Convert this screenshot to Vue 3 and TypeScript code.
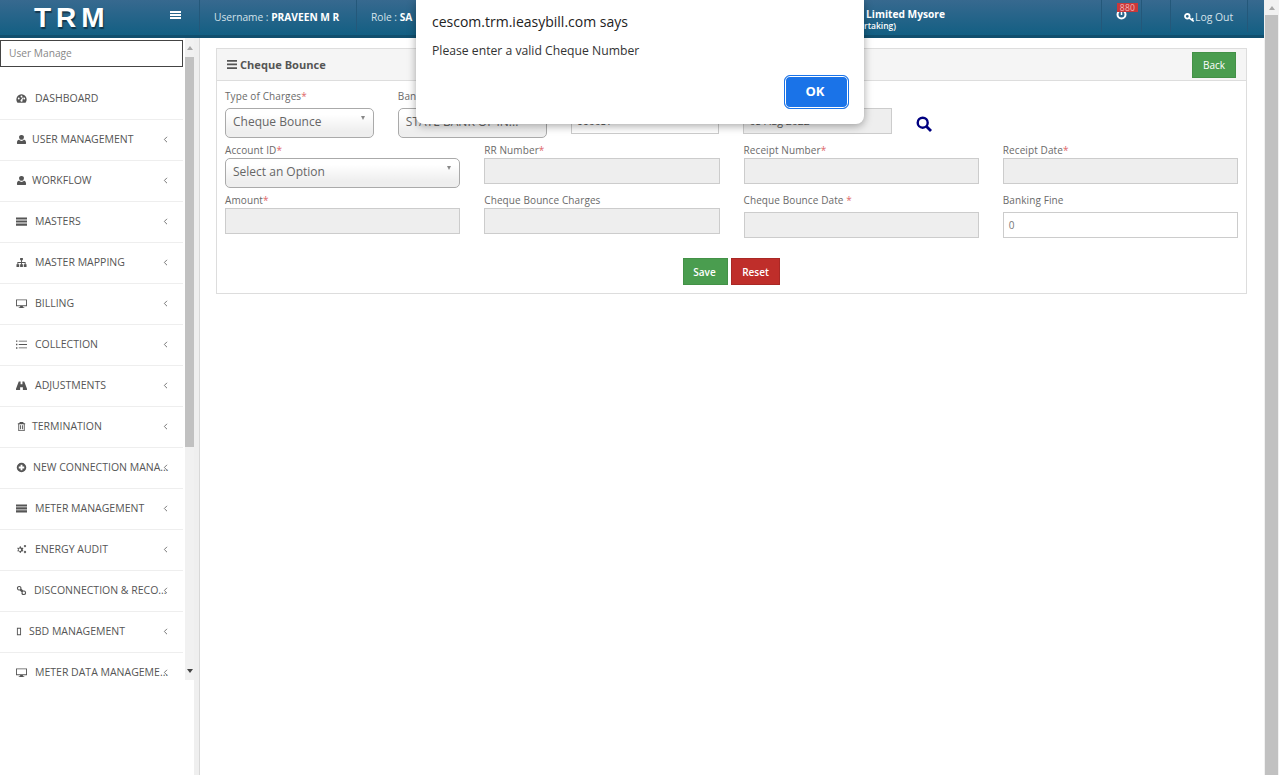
<script setup lang="ts">
interface MenuItem { label: string; icon: string; gap: number }
const items: MenuItem[] = [
  { label: 'DASHBOARD', icon: 'gauge', gap: 8 },
  { label: 'USER MANAGEMENT', icon: 'user', gap: 5 },
  { label: 'WORKFLOW', icon: 'user', gap: 5 },
  { label: 'MASTERS', icon: 'bars', gap: 8 },
  { label: 'MASTER MAPPING', icon: 'sitemap', gap: 8 },
  { label: 'BILLING', icon: 'desktop', gap: 8 },
  { label: 'COLLECTION', icon: 'list', gap: 8 },
  { label: 'ADJUSTMENTS', icon: 'binoculars', gap: 8 },
  { label: 'TERMINATION', icon: 'trash', gap: 5 },
  { label: 'NEW CONNECTION MANA...', icon: 'plus', gap: 6 },
  { label: 'METER MANAGEMENT', icon: 'server', gap: 8 },
  { label: 'ENERGY AUDIT', icon: 'cogs', gap: 8 },
  { label: 'DISCONNECTION & RECO...', icon: 'link', gap: 7 },
  { label: 'SBD MANAGEMENT', icon: 'box', gap: 2 },
  { label: 'METER DATA MANAGEME...', icon: 'desktop', gap: 8 }
]
const row2 = ['RR Number', 'Receipt Number', 'Receipt Date']
</script>

<template>
  <div class="page">
    <div class="column">
      <header class="topbar">
        <div class="brand">TRM</div>
        <div class="burger-cell">
          <svg class="burger" width="11" height="8" viewBox="0 0 11 8"><path d="M0 0h11v2H0zM0 3h11v2H0zM0 6h11v2H0z" fill="#fff" /></svg>
        </div>
        <div class="cell user-cell">Username : <b>PRAVEEN M R</b></div>
        <div class="cell role-cell">Role : <b>SA</b></div>
        <div class="org-cell">
          <div class="org-main">Chamundeshwari Electricity Supply Corporation Limited Mysore</div>
          <div class="org-sub">(A Government of Karnataka Undertaking)</div>
        </div>
        <div class="cell notify-cell">
          <svg class="clock" width="11" height="11" viewBox="0 0 11 11"><circle cx="5.500" cy="5.500" r="4" fill="none" stroke="#fff" stroke-width="2" /><path d="M5.500 3v3" stroke="#fff" stroke-width="1.500" /></svg>
          <span class="badge">880</span>
        </div>
        <div class="cell spacer-cell"></div>
        <div class="cell logout-cell">
          <svg width="11" height="9" viewBox="0 0 11 9"><circle cx="3.300" cy="3.300" r="2.300" fill="none" stroke="#fff" stroke-width="1.800" /><path d="M5 4.800L9.800 8.300M7.600 6.600L9.300 5.300" fill="none" stroke="#fff" stroke-width="1.600" /></svg>
          <span>Log Out</span>
        </div>
        <div class="tail-cell"></div>
      </header>

      <div class="body">
        <aside class="sidebar">
          <div class="side-scroll">
            <div class="side-list">
              <div class="search-box">User Manage</div>
              <nav class="menu">
                <div v-for="(item, i) in items" :key="i" class="menu-item">
                  <span class="menu-icon">
                    <svg width="11" height="11" viewBox="0 0 12 12" fill="#555">
                      <path v-if="item.icon === 'gauge'" fill-rule="evenodd" d="M6 1.500a5.500 5.500 0 0 0-5 8l.6 1h8.800l.6-1a5.500 5.500 0 0 0-5-8zM3 7a1 1 0 1 1 0-2 1 1 0 0 1 0 2zm3-2.200a1 1 0 1 1 0-2 1 1 0 0 1 0 2zm0 4.700a1.200 1.200 0 0 1-.4-2.300L7.500 4.600l.5.2-1 3a1.200 1.200 0 0 1-1 1.700zM9 7a1 1 0 1 1 0-2 1 1 0 0 1 0 2z" />
                      <path v-else-if="item.icon === 'user'" d="M6 1a2.600 2.600 0 0 1 2.600 3A2.600 2.600 0 0 1 6 6.400 2.600 2.600 0 0 1 3.400 4 2.600 2.600 0 0 1 6 1zM3.200 6.400C4 7.200 4.900 7.500 6 7.500s2-.3 2.800-1.100c1.400.3 2.200 1.600 2.200 3.300 0 .9-.6 1.300-1.300 1.300H2.300C1.600 11 1 10.600 1 9.700c0-1.700.8-3 2.200-3.300z" />
                      <path v-else-if="item.icon === 'bars'" d="M0 1.500h12v2.300H0zM0 4.900h12v2.300H0zM0 8.300h12v2.300H0z" />
                      <path v-else-if="item.icon === 'sitemap'" d="M4.500 1h3v2.500H6.500V5.500H10.500V8H11.500V11H8.500V8H9.500V6.500H6.500V8H7.500V11H4.500V8H5.500V6.500H2.500V8H3.500V11H.5V8H1.500V5.500H5.500V3.500H4.500z" />
                      <path v-else-if="item.icon === 'desktop'" fill-rule="evenodd" d="M0 1.500h12v7.500H7.500v1h1.500v1H3v-1h1.500v-1H0zM1 2.500v5.500h10V2.500z" />
                      <path v-else-if="item.icon === 'list'" d="M0 1.500h1.500V3H0zM0 5.200h1.500v1.500H0zM0 9h1.500v1.500H0zM3 1.800h9v1H3zM3 5.500h9v1H3zM3 9.200h9v1H3z" />
                      <path v-else-if="item.icon === 'binoculars'" d="M3 1.500h2v3h2v-3h2l3 8v1.500H7.500V8h-3v3H0V9.500z" />
                      <path v-else-if="item.icon === 'trash'" fill-rule="evenodd" d="M2 2.500h1.500L4.200 1h3.600l.7 1.500H10v1H9.500V11h-7V3.500H2zM3.500 3.500V10h5V3.500zM4.500 4.500h1v4.500h-1zM6.500 4.500h1v4.500h-1z" />
                      <path v-else-if="item.icon === 'plus'" fill-rule="evenodd" d="M6 .8a5.200 5.200 0 1 1 0 10.400A5.200 5.200 0 0 1 6 .8zM5 3v2H3v2h2v2h2V7h2V5H7V3z" />
                      <path v-else-if="item.icon === 'server'" d="M0 1.500h12v2.400H0zM0 4.700h12v2.400H0zM0 7.900h12v2.400H0z" />
                      <path v-else-if="item.icon === 'cogs'" fill-rule="evenodd" d="M4.500 2.500l.9.200.2 1 1 .6.900-.4.600 1-.7.600v1.200l.7.600-.6 1-.9-.4-1 .6-.2 1h-1.300l-.2-1-1-.6-.9.400-.6-1 .7-.6V5.500l-.7-.6.600-1 .9.400 1-.6.200-1zM4.200 4.800a1.400 1.400 0 1 0 .1 2.800 1.400 1.400 0 0 0-.1-2.800zM9.800 1a1.300 1.300 0 1 1 0 2.600 1.300 1.300 0 0 1 0-2.600zm0 .8a.5.500 0 1 0 0 1 .5.500 0 0 0 0-1zM9.800 7.400a1.300 1.300 0 1 1 0 2.600 1.300 1.300 0 0 1 0-2.600zm0 .8a.5.500 0 1 0 0 1 .5.500 0 0 0 0-1z" />
                      <path v-else-if="item.icon === 'link'" fill-rule="evenodd" d="M3.500 1a2.500 2.500 0 0 1 2.400 3.200l1.900 1.900a2.500 2.500 0 1 1-1.700 1.700L4.200 5.900A2.500 2.500 0 1 1 3.500 1zm0 1.200a1.300 1.300 0 1 0 0 2.600 1.300 1.300 0 0 0 0-2.600zm5 5a1.300 1.300 0 1 0 0 2.600 1.300 1.300 0 0 0 0-2.600z" />
                      <path v-else fill-rule="evenodd" d="M1 2h4.500v8H1zM2 3v6h2.500V3z" />
                    </svg>
                  </span>
                  <span class="menu-label" :style="{ marginLeft: item.gap + 'px' }">{{ item.label }}</span>
                  <svg v-if="i > 0" class="chev" width="5" height="7" viewBox="0 0 5 7"><path d="M4 .8L1.300 3.500 4 6.200" fill="none" stroke="#777" stroke-width="1" /></svg>
                </div>
              </nav>
            </div>
            <div class="side-bar">
              <div class="arrow-cell"><span class="tri-up"></span></div>
              <div class="thumb"></div>
              <div class="track"></div>
              <div class="arrow-cell"><span class="tri-down"></span></div>
            </div>
          </div>
        </aside>
        <div class="gutter"></div>

        <main class="main">
          <section class="panel">
            <div class="panel-head">
              <div class="panel-title">
                <svg width="10" height="9" viewBox="0 0 10 9"><path d="M0 0h10v1.700H0zM0 3.600h10v1.700H0zM0 7.200h10v1.700H0z" fill="#555" /></svg>
                <span>Cheque Bounce</span>
              </div>
              <button class="btn green back" type="button">Back</button>
            </div>
            <div class="panel-body">
              <div class="grid six">
                <div class="field wide-gap">
                  <label>Type of Charges<i>*</i></label>
                  <div class="select">Cheque Bounce<span class="caret"></span></div>
                </div>
                <div class="field wide-gap">
                  <label>Bank Name<i>*</i></label>
                  <div class="select">STATE BANK OF IN...</div>
                </div>
                <div class="field wide-gap">
                  <label>Cheque Number<i>*</i></label>
                  <div class="input plain under">660037</div>
                </div>
                <div class="field wide-gap">
                  <label>Cheque Date<i>*</i></label>
                  <div class="input disabled under">05 Aug 2022</div>
                </div>
                <div class="search-cell">
                  <svg width="16" height="16" viewBox="0 0 16 16"><circle cx="6.700" cy="6.700" r="5" fill="none" stroke="#000080" stroke-width="2.400" /><path d="M10.500 10.500l4.500 4.500" stroke="#000080" stroke-width="2.800" /></svg>
                </div>
              </div>

              <div class="grid four">
                <div class="field">
                  <label>Account ID<i>*</i></label>
                  <div class="select">Select an Option<span class="caret"></span></div>
                </div>
                <div v-for="name in row2" :key="name" class="field">
                  <label>{{ name }}<i>*</i></label>
                  <div class="input disabled"></div>
                </div>
              </div>

              <div class="grid four">
                <div class="field">
                  <label>Amount<i>*</i></label>
                  <div class="input disabled"></div>
                </div>
                <div class="field">
                  <label>Cheque Bounce Charges</label>
                  <div class="input disabled"></div>
                </div>
                <div class="field wide-gap">
                  <label>Cheque Bounce Date <i>*</i></label>
                  <div class="input disabled"></div>
                </div>
                <div class="field wide-gap">
                  <label>Banking Fine</label>
                  <div class="input plain">0</div>
                </div>
              </div>

              <div class="actions">
                <button class="btn green save" type="button">Save</button>
                <button class="btn red reset" type="button">Reset</button>
              </div>
            </div>
          </section>
        </main>
      </div>
    </div>

    <div class="page-bar">
      <div class="page-arrow"><span class="tri-up"></span></div>
      <div class="page-thumb"></div>
    </div>

    <div class="dialog" role="alertdialog">
      <div class="dialog-title">cescom.trm.ieasybill.com says</div>
      <div class="dialog-text">Please enter a valid Cheque Number</div>
      <div class="dialog-actions">
        <button class="ok" type="button">OK</button>
      </div>
    </div>
  </div>
</template>

<style>
html, body { margin: 0; padding: 0; overflow: hidden; background: #fff; }
</style>

<style scoped>
* { box-sizing: border-box; }
.page {
  position: relative;
  display: flex;
  width: 1279px;
  height: 775px;
  overflow: hidden;
  background: #fff;
  font-family: "Open Sans", "Noto Sans", sans-serif;
  color: #555;
}
.column { width: 1264px; flex: none; display: flex; flex-direction: column; }

/* top bar */
.topbar {
  display: flex;
  height: 38px;
  flex: none;
  color: #d5e2ea;
  font-size: 10px;
  background: linear-gradient(#37698f, #135f83);
  border-bottom: 3px solid #114f6e;
}
.brand {
  width: 140px;
  padding-left: 34px;
  font-family: "Liberation Sans", Arial, sans-serif;
  font-size: 28px;
  line-height: 35px;
  font-weight: 700;
  letter-spacing: 5px;
  color: #fff;
  text-shadow: 1px 2px 1px rgba(0, 0, 0, .45);
}
.burger-cell { width: 59px; padding: 11px 0 0 30px; }
.burger { display: block; }
.cell {
  height: 32px;
  border-left: 1px solid #24587a;
  white-space: nowrap;
  line-height: 14px;
  padding-top: 10px;
}
.cell b { color: #fff; font-weight: 700; }
.user-cell { width: 157px; padding-left: 14px; font-size: 10.200px; }
.role-cell { width: 243px; padding-left: 14px; font-size: 10.200px; }
.org-cell { width: 346px; padding-top: 8px; text-align: right; white-space: nowrap; color: #fff; }
.org-main { font-size: 10.200px; line-height: 13px; font-weight: 700; }
.org-sub { padding-right: 49px; font-size: 8.500px; line-height: 10px; font-weight: 600; }
.notify-cell { position: relative; width: 40px; margin-left: 156px; padding: 0; }
.clock { position: absolute; left: 14px; top: 9px; }
.badge {
  position: absolute;
  left: 15px;
  top: 3px;
  width: 21px;
  height: 9px;
  background: #c9383a;
  color: #f3b5b5;
  font-size: 8.500px;
  line-height: 9px;
  text-align: center;
  letter-spacing: .3px;
}
.spacer-cell { width: 29px; padding: 0; }
.logout-cell {
  display: flex;
  align-items: flex-start;
  width: 77px;
  padding-left: 13px;
  font-size: 10.400px;
}
.logout-cell svg { margin-top: 3px; flex: none; }
.tail-cell { flex: 1; height: 32px; border-left: 1px solid #24587a; }

/* body */
.body { flex: 1; display: flex; min-height: 0; }
.sidebar { width: 194px; flex: none; }
.side-scroll { display: flex; height: 642px; overflow: hidden; }
.side-list { width: 185px; flex: none; padding-top: 2px; overflow: hidden; }
.search-box {
  width: 183px;
  height: 27px;
  border: 1px solid #444;
  padding-left: 8px;
  font-size: 10.200px;
  line-height: 25px;
  color: #888;
}
.menu { padding-top: 12px; width: 183px; }
.menu-item {
  position: relative;
  display: flex;
  align-items: center;
  height: 41px;
  padding: 0 0 2px 16px;
  border-bottom: 1px solid #eee;
  white-space: nowrap;
}
.menu-icon { display: flex; width: 11px; flex: none; }
.menu-label { font-size: 10.500px; color: #555; }
.chev { position: absolute; left: 163px; top: 16px; }
.side-bar { width: 9px; flex: none; display: flex; flex-direction: column; background: #f1f1f1; }
.arrow-cell { height: 19px; flex: none; display: flex; align-items: center; justify-content: center; }
.thumb { height: 390px; flex: none; background: #c1c1c1; }
.track { flex: 1; }
.tri-up { width: 0; height: 0; border-left: 3.500px solid transparent; border-right: 3.500px solid transparent; border-bottom: 4px solid #a8a8a8; }
.tri-down { width: 0; height: 0; border-left: 3.500px solid transparent; border-right: 3.500px solid transparent; border-top: 4px solid #444; }
.gutter { width: 6px; flex: none; background: #efefef; border-right: 1px solid #d8d8d8; }

/* main */
.main { flex: 1; min-width: 0; padding: 10px 17px 0 16px; }
.panel { border: 1px solid #ddd; }
.panel-head {
  display: flex;
  align-items: center;
  justify-content: space-between;
  height: 32px;
  padding: 0 10px;
  background: #f5f5f5;
  border-bottom: 1px solid #ddd;
}
.panel-title { display: flex; align-items: center; gap: 3px; padding-bottom: 1px; font-size: 11.100px; font-weight: 700; color: #555; }
.panel-body { padding: 8px 8px 8px; }
.grid { display: grid; column-gap: 24px; margin-bottom: 5px; align-items: start; }
.six { grid-template-columns: repeat(6, 1fr); }
.four { grid-template-columns: repeat(4, 1fr); }
.field { min-width: 0; }
label { display: block; height: 14px; margin-bottom: 1px; font-size: 10px; line-height: 14px; letter-spacing: .1px; color: #6a6a6a; white-space: nowrap; }
.wide-gap label { margin-bottom: 5px; }
label i { color: #e0686a; font-style: normal; }
.select {
  position: relative;
  height: 30px;
  padding-left: 7px;
  border: 1px solid #aaa;
  border-radius: 5px;
  background: linear-gradient(#fff 20%, #eee 80%);
  font-size: 12px;
  line-height: 26px;
  color: #666;
  white-space: nowrap;
  overflow: hidden;
}
.caret {
  position: absolute;
  right: 8px;
  top: 7px;
  width: 0;
  height: 0;
  border-left: 2.500px solid transparent;
  border-right: 2.500px solid transparent;
  border-top: 4px solid #888;
}
.input {
  height: 26px;
  padding-left: 5px;
  border: 1px solid #ccc;
  font-size: 10px;
  line-height: 24px;
  color: #777;
}
.input.under { font-size: 10.500px; color: #555; }
.plain { background: #fff; }
.disabled { background: #eee; }
.search-cell { padding-top: 27px; }
.search-cell svg { display: block; }
.actions { display: flex; justify-content: center; gap: 3px; margin-top: 20px; }
.btn {
  height: 27px;
  padding: 0;
  border: 1px solid transparent;
  border-radius: 0;
  font-family: inherit;
  font-size: 10px;
  font-weight: 600;
  color: #fff;
}
.green { background: #4a9d4f; border-color: #439147; }
.red { background: #bf2e2a; border-color: #a92825; }
.back { width: 44px; height: 26px; font-weight: 400; }
.save { width: 45px; padding-right: 2px; }
.reset { width: 49px; }

/* page scrollbar */
.page-bar { width: 15px; flex: none; display: flex; flex-direction: column; background: #f1f1f1; }
.page-arrow { height: 15px; flex: none; display: flex; align-items: center; justify-content: center; }
.page-thumb { flex: 1; margin: 0 1px; background: #c1c1c1; }

/* native-style alert, laid over the page */
.dialog {
  position: absolute;
  left: 416px;
  top: 0;
  width: 448px;
  height: 124px;
  padding: 0 16px;
  background: #fff;
  border-radius: 0 0 8px 8px;
  box-shadow: 0 2px 8px rgba(0, 0, 0, .35);
  color: #222;
}
.dialog-title { padding-top: 12px; font-size: 14px; line-height: 20px; }
.dialog-text { margin-top: 10px; font-size: 12.200px; line-height: 18px; color: #333; }
.dialog-actions { display: flex; justify-content: flex-end; margin-top: 15px; margin-right: -1px; }
.ok {
  width: 65px;
  height: 34px;
  padding: 0 3px 2px 0;
  border: 1px solid #1a73e8;
  border-radius: 6px;
  background: #1a73e8;
  box-shadow: inset 0 0 0 1px #fff;
  color: #fff;
  font-family: inherit;
  font-size: 13px;
  font-weight: 700;
}
</style>
